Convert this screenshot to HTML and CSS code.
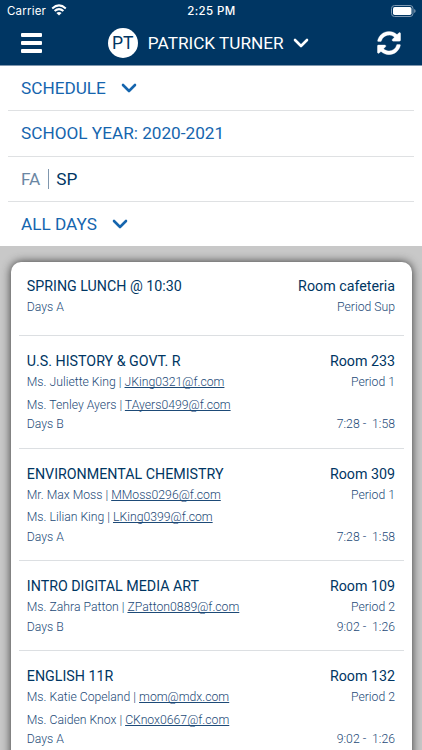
FILE: index.html
```html
<!DOCTYPE html>
<html lang="en">
<head>
    <meta charset="UTF-8">
    <meta name="viewport" content="width=device-width, initial-scale=1.0">
    <title>Schedule</title>
    <link rel="stylesheet" href="styles.css">
</head>
<body>
    <header class="header">
        <div class="status-bar">
            <div class="carrier">
                <span>Carrier</span>
                <svg class="wifi" viewBox="0 0 16 12" width="16" height="12">
                    <path d="M1.2 4.4 Q8 -1.6 14.8 4.4" fill="none" stroke="#fff" stroke-width="2"/>
                    <path d="M3.6 7.1 Q8 3.2 12.4 7.1" fill="none" stroke="#fff" stroke-width="2"/>
                    <path d="M5.4 8.9 Q8 6.9 10.6 8.9 L8 11.6 Z" fill="#fff"/>
                </svg>
            </div>
            <div class="clock">2:25 PM</div>
            <div class="battery">
                <svg viewBox="0 0 25 12" width="25" height="12">
                    <rect x="0.5" y="0.5" width="21.5" height="11" rx="3" fill="none" stroke="#7f99b2"/>
                    <rect x="2" y="2" width="18.5" height="8" rx="1.7" fill="#fff"/>
                    <path d="M23.2 4 Q24.6 4.6 24.6 6 Q24.6 7.4 23.2 8 Z" fill="#7f99b2"/>
                </svg>
            </div>
        </div>
        <div class="nav-bar">
            <button class="menu" aria-label="Menu"><span></span><span></span><span></span></button>
            <div class="student">
                <span class="avatar">PT</span>
                <span class="student-name">PATRICK TURNER</span>
                <svg class="chevron" viewBox="0 0 16 10" width="16" height="10"><path d="M2 2 L8 8 L14 2"/></svg>
            </div>
            <button class="refresh" aria-label="Refresh">
                <svg viewBox="0 0 512 512" width="24" height="24" fill="#fff" stroke="#fff" stroke-width="6">
                    <path d="M370.72 133.28C339.458 104.008 298.888 87.962 255.848 88c-77.458.068-144.328 53.178-162.791 126.85-1.344 5.363-6.122 9.15-11.651 9.15H24.103c-7.498 0-13.194-6.807-11.807-14.176C33.933 94.924 134.813 8 256 8c66.448 0 126.791 26.136 171.315 68.685L463.03 40.97C478.149 25.851 504 36.559 504 57.941V192c0 13.255-10.745 24-24 24H345.941c-21.382 0-32.09-25.851-16.971-40.971l41.75-41.749zM32 296h134.059c21.382 0 32.09 25.851 16.971 40.971l-41.75 41.75c31.262 29.273 71.835 45.319 114.876 45.28 77.418-.07 144.315-53.144 162.787-126.849 1.344-5.363 6.122-9.15 11.651-9.15h57.304c7.498 0 13.194 6.807 11.807 14.176C478.067 417.076 377.187 504 256 504c-66.448 0-126.791-26.136-171.315-68.685L48.97 471.03C33.851 486.149 8 475.441 8 454.059V320c0-13.255 10.745-24 24-24z"/>
                </svg>
            </button>
        </div>
    </header>

    <div class="filters">
        <div class="filter">
            <span>SCHEDULE</span>
            <svg class="chevron" viewBox="0 0 16 10" width="16" height="10"><path d="M2 2 L8 8 L14 2"/></svg>
        </div>
        <div class="filter"><span>SCHOOL YEAR: 2020-2021</span></div>
        <div class="filter terms">
            <span class="term">FA</span>
            <span class="term active">SP</span>
        </div>
        <div class="filter">
            <span>ALL DAYS</span>
            <svg class="chevron" viewBox="0 0 16 10" width="16" height="10"><path d="M2 2 L8 8 L14 2"/></svg>
        </div>
    </div>

    <main class="content">
        <div class="card">
            <section class="course lunch">
                <div class="row title"><span>SPRING LUNCH @ 10:30</span><span>Room cafeteria</span></div>
                <div class="row"><span>Days A</span><span>Period Sup</span></div>
            </section>
            <section class="course">
                <div class="row title"><span>U.S. HISTORY &amp; GOVT. R</span><span>Room 233</span></div>
                <div class="row teacher"><span>Ms. Juliette King | <a href="#">JKing0321@f.com</a></span><span class="period">Period 1</span></div>
                <div class="row teacher"><span>Ms. Tenley Ayers | <a href="#">TAyers0499@f.com</a></span></div>
                <div class="row"><span>Days B</span><span>7:28 -&nbsp; 1:58</span></div>
            </section>
            <section class="course">
                <div class="row title"><span>ENVIRONMENTAL CHEMISTRY</span><span>Room 309</span></div>
                <div class="row teacher"><span>Mr. Max Moss | <a href="#">MMoss0296@f.com</a></span><span class="period">Period 1</span></div>
                <div class="row teacher"><span>Ms. Lilian King | <a href="#">LKing0399@f.com</a></span></div>
                <div class="row"><span>Days A</span><span>7:28 -&nbsp; 1:58</span></div>
            </section>
            <section class="course">
                <div class="row title"><span>INTRO DIGITAL MEDIA ART</span><span>Room 109</span></div>
                <div class="row teacher"><span>Ms. Zahra Patton | <a href="#">ZPatton0889@f.com</a></span><span class="period">Period 2</span></div>
                <div class="row"><span>Days B</span><span>9:02 -&nbsp; 1:26</span></div>
            </section>
            <section class="course">
                <div class="row title"><span>ENGLISH 11R</span><span>Room 132</span></div>
                <div class="row teacher"><span>Ms. Katie Copeland | <a href="#">mom@mdx.com</a></span><span class="period">Period 2</span></div>
                <div class="row teacher"><span>Ms. Caiden Knox | <a href="#">CKnox0667@f.com</a></span></div>
                <div class="row"><span>Days A</span><span>9:02 -&nbsp; 1:26</span></div>
            </section>
        </div>
    </main>
</body>
</html>
```
FILE: styles.css
```css
* {
    box-sizing: border-box;
}
body {
    margin: 0;
    height: 750px;
    overflow: hidden;
    display: flex;
    flex-direction: column;
    font-family: Roboto, sans-serif;
    background: #fff;
}
button {
    border: none;
    background: none;
    padding: 0;
}
.header {
    height: 66px;
    flex: none;
    background: #003663;
    border-bottom: 1px solid #8097ae;
    color: #fff;
}
.status-bar {
    height: 21px;
    display: grid;
    grid-template-columns: 1fr auto 1fr;
    align-items: center;
    padding: 1px 6px 0 7px;
    font-family: Inter, sans-serif;
    font-size: 11.5px;
}
.carrier {
    display: flex;
    align-items: center;
    gap: 5px;
    letter-spacing: 0.2px;
}
.wifi {
    margin-top: -2px;
}
.clock {
    font-weight: 500;
    letter-spacing: 0.4px;
}
.battery {
    display: flex;
    justify-content: flex-end;
}
.nav-bar {
    height: 44px;
    display: flex;
    align-items: center;
    justify-content: space-between;
    padding: 0 21px;
}
.menu {
    display: flex;
    flex-direction: column;
    gap: 4.5px;
    width: 21px;
}
.menu span {
    height: 3.5px;
    border-radius: 1px;
    background: #fff;
}
.student {
    display: flex;
    align-items: center;
    margin-right: 2px;
}
.avatar {
    width: 30px;
    height: 30px;
    line-height: 30px;
    border-radius: 50%;
    background: #fff;
    color: #003663;
    font-size: 17.5px;
    text-align: center;
}
.student-name {
    margin: 0 9.5px 0 10px;
    font-size: 17.2px;
}
.chevron path {
    fill: none;
    stroke: #fff;
    stroke-width: 2.6;
    stroke-linecap: round;
    stroke-linejoin: round;
}
.refresh {
    height: 24px;
}
.filters {
    flex: none;
    padding: 0 8px;
}
.filter {
    height: 45.3px;
    display: flex;
    align-items: center;
    gap: 15px;
    padding-left: 13px;
    border-bottom: 1px solid #dfe1e3;
    color: #1565ae;
    font-size: 17.2px;
}
.filter:last-child {
    height: 44.5px;
    border-bottom: none;
}
.filter .chevron path {
    stroke: #1565ae;
}
.terms {
    gap: 0;
}
.term {
    line-height: 20px;
    padding-right: 7.5px;
    border-right: 1px solid #8097ae;
    color: #6b87a3;
}
.term.active {
    padding: 0 0 0 7.5px;
    border: none;
    color: #003663;
}
.content {
    flex: 1;
    padding: 16px 10.5px 0;
    background: #c8c8c8;
    overflow: hidden;
}
.card {
    height: 600px;
    background: #fff;
    border-radius: 10px;
    padding: 0 8px;
    box-shadow: 0 0 10px #333;
}
.course {
    padding: 14.7px 8.5px 15px 8.3px;
    border-bottom: 1px solid #dcdfe2;
}
.row {
    display: flex;
    justify-content: space-between;
    height: 16.8px;
    line-height: 17px;
    font-size: 12.22px;
    font-weight: 300;
    color: #1d4a77;
}
.row.title {
    height: 20px;
    line-height: 20px;
    font-size: 14.25px;
    font-weight: 400;
    color: #003663;
}
.row.teacher {
    height: 22.5px;
    line-height: 22px;
}
.lunch {
    padding-top: 14px;
    padding-bottom: 18.6px;
}
.lunch .row {
    height: 20px;
    line-height: 20px;
}
.lunch .row.title {
    height: 20.5px;
}
.row a {
    color: inherit;
    text-decoration-skip-ink: none;
}
```
